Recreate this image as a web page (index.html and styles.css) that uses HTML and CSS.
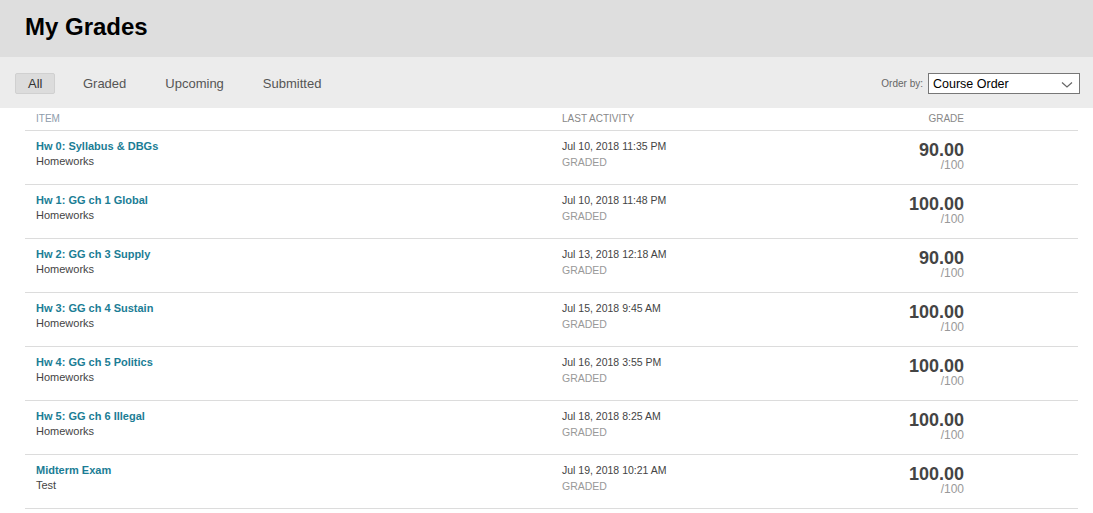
FILE: index.html
```html
<!DOCTYPE html>
<html lang="en">
<head>
  <meta charset="UTF-8" />
  <title>My Grades</title>
  <link rel="stylesheet" href="styles.css">
</head>
<body>
  <header class="page-head">
    <h1>My Grades</h1>
  </header>

  <div class="filter-bar">
    <div class="tabs">
      <button class="tab active">All</button>
      <button class="tab">Graded</button>
      <button class="tab">Upcoming</button>
      <button class="tab">Submitted</button>
    </div>
    <div class="order">
      <label for="orderBy">Order by:</label>
      <div class="select-box" id="orderBy">
        <span>Course Order</span>
        <svg width="12" height="8" viewBox="0 0 12 8"><path d="M1 1.5 L6 6 L11 1.5" fill="none" stroke="#666" stroke-width="1.2"/></svg>
      </div>
    </div>
  </div>

  <div class="grades">
    <div class="row head-row">
      <div class="col-item">Item</div>
      <div class="col-act">Last Activity</div>
      <div class="col-grade">Grade</div>
    </div>
    <div id="rows"></div>
  </div>

  <script>
    const items = [
      { name: "Hw 0: Syllabus &amp; DBGs", cat: "Homeworks", date: "Jul 10, 2018 11:35 PM", grade: "90.00" },
      { name: "Hw 1: GG ch 1 Global", cat: "Homeworks", date: "Jul 10, 2018 11:48 PM", grade: "100.00" },
      { name: "Hw 2: GG ch 3 Supply", cat: "Homeworks", date: "Jul 13, 2018 12:18 AM", grade: "90.00" },
      { name: "Hw 3: GG ch 4 Sustain", cat: "Homeworks", date: "Jul 15, 2018 9:45 AM", grade: "100.00" },
      { name: "Hw 4: GG ch 5 Politics", cat: "Homeworks", date: "Jul 16, 2018 3:55 PM", grade: "100.00" },
      { name: "Hw 5: GG ch 6 Illegal", cat: "Homeworks", date: "Jul 18, 2018 8:25 AM", grade: "100.00" },
      { name: "Midterm Exam", cat: "Test", date: "Jul 19, 2018 10:21 AM", grade: "100.00" }
    ];

    const rows = document.getElementById('rows');
    items.forEach(it => {
      const div = document.createElement('div');
      div.className = 'row';
      div.innerHTML = `
        <div class="col-item">
          <a class="item-name">${it.name}</a>
          <div class="item-cat">${it.cat}</div>
        </div>
        <div class="col-act">
          <div class="act-date">${it.date}</div>
          <div class="act-status">GRADED</div>
        </div>
        <div class="col-grade">
          <div class="score">${it.grade}</div>
          <div class="out-of">/100</div>
        </div>
      `;
      rows.appendChild(div);
    });
  </script>
</body>
</html>
```

FILE: styles.css
```css
body {
  margin: 0;
  font-family: "Liberation Sans", Arial, sans-serif;
  background: #fff;
  color: #333;
}
.page-head {
  background: #dedede;
  height: 57px;
  padding: 0 25px;
  display: flex;
  align-items: center;
}
.page-head h1 {
  margin: 0 0 4px;
  font-size: 24px;
  font-weight: bold;
  color: #000;
}
.filter-bar {
  background: #ececec;
  height: 51px;
  box-sizing: border-box;
  display: flex;
  align-items: center;
  justify-content: space-between;
  padding: 2px 13px 0 15px;
}
.tabs {
  display: flex;
}
.tab {
  font-family: inherit;
  font-size: 13px;
  color: #555;
  background: none;
  border: 1px solid transparent;
  border-radius: 2px;
  padding: 0 18.5px;
  height: 21px;
  line-height: 19px;
  cursor: pointer;
}
.tab.active {
  background: #dcdcdc;
  border-color: #d0d0d0;
  color: #333;
  padding: 0 12px;
  margin-right: 8px;
}
.order {
  display: flex;
  align-items: center;
  gap: 5px;
}
.order label {
  font-size: 10px;
  color: #666;
}
.select-box {
  width: 140px;
  height: 19px;
  border: 1px solid #777;
  background: #fff;
  display: flex;
  align-items: center;
  justify-content: space-between;
  padding: 0 6px 0 4px;
  box-sizing: content-box;
  font-size: 12.5px;
  color: #000;
}
.select-box svg {
  margin-top: 2px;
}
.grades {
  margin: 0 15px 0 25px;
}
.row {
  display: grid;
  grid-template-columns: 526px 262px 140px;
  padding-left: 11px;
  height: 53px;
  border-bottom: 1px solid #dcdcdc;
  box-sizing: content-box;
}
.row > div {
  padding-top: 8px;
}
.head-row {
  height: 22px;
  font-size: 10px;
  text-transform: uppercase;
  color: #888;
}
.head-row > div {
  padding-top: 5px;
}
.head-row .col-item {
  color: #8e9cab;
}
.col-grade {
  text-align: right;
}
.item-name {
  display: block;
  font-size: 11px;
  font-weight: bold;
  color: #1b7d95;
  line-height: 14px;
}
.item-cat {
  font-size: 11px;
  color: #444;
  line-height: 14px;
  margin-top: 1px;
}
.act-date {
  font-size: 10.5px;
  color: #444;
  line-height: 14px;
}
.act-status {
  font-size: 10.5px;
  color: #999;
  line-height: 14px;
  margin-top: 2px;
}
.col-grade .score {
  font-size: 18px;
  font-weight: bold;
  color: #444;
  line-height: 18px;
  margin-top: 2px;
}
.col-grade .out-of {
  font-size: 12px;
  color: #999;
  line-height: 13px;
}
```
